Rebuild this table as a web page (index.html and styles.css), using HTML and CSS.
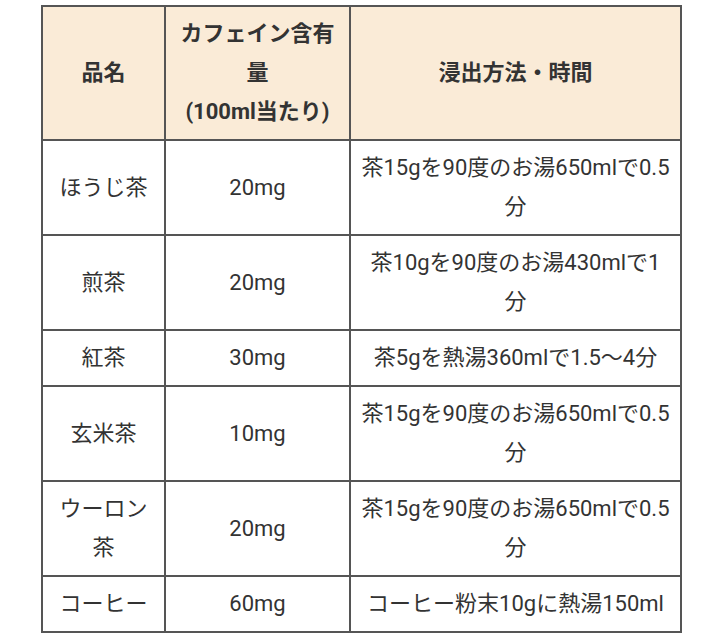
FILE: index.html
```html
<!DOCTYPE html>
<html lang="ja">
<head>
<meta charset="utf-8">
<link rel="stylesheet" href="styles.css">
</head>
<body>
<div class="wrap">
<table class="tea">
  <colgroup>
    <col class="c1"><col class="c2"><col class="c3">
  </colgroup>
  <thead>
    <tr><th>品名</th><th>カフェイン含有量<span class="nw">(100ml当たり)</span></th><th>浸出方法・時間</th></tr>
  </thead>
  <tbody>
    <tr><td>ほうじ茶</td><td>20mg</td><td>茶15gを90度のお湯650mlで0.5分</td></tr>
    <tr><td>煎茶</td><td>20mg</td><td>茶10gを90度のお湯430mlで1分</td></tr>
    <tr><td>紅茶</td><td>30mg</td><td>茶5gを熱湯360mlで1.5～4分</td></tr>
    <tr><td>玄米茶</td><td>10mg</td><td>茶15gを90度のお湯650mlで0.5分</td></tr>
    <tr><td>ウーロン茶</td><td>20mg</td><td>茶15gを90度のお湯650mlで0.5分</td></tr>
    <tr><td>コーヒー</td><td>60mg</td><td>コーヒー粉末10gに熱湯150ml</td></tr>
  </tbody>
</table>
</div>
</body>
</html>
```

FILE: styles.css
```css
html, body {
  margin: 0;
  padding: 0;
  background: #ffffff;
}
.wrap {
  padding: 5px 0 0 41px;
}
.tea {
  border-collapse: collapse;
  table-layout: fixed;
  width: 639px;
  font-family: Roboto, "Noto Sans CJK JP", sans-serif;
  font-size: 22px;
  line-height: 39px;
  color: #333333;
}
.c1 { width: 123px; }
.c2 { width: 185px; }
.c3 { width: 331px; }
.tea th, .tea td {
  border: 2px solid #555555;
  padding: 7px 10px 8px;
  text-align: center;
  vertical-align: middle;
}
.tea th {
  background: #faebd7;
  font-weight: bold;
}
.nw {
  white-space: nowrap;
}
```
